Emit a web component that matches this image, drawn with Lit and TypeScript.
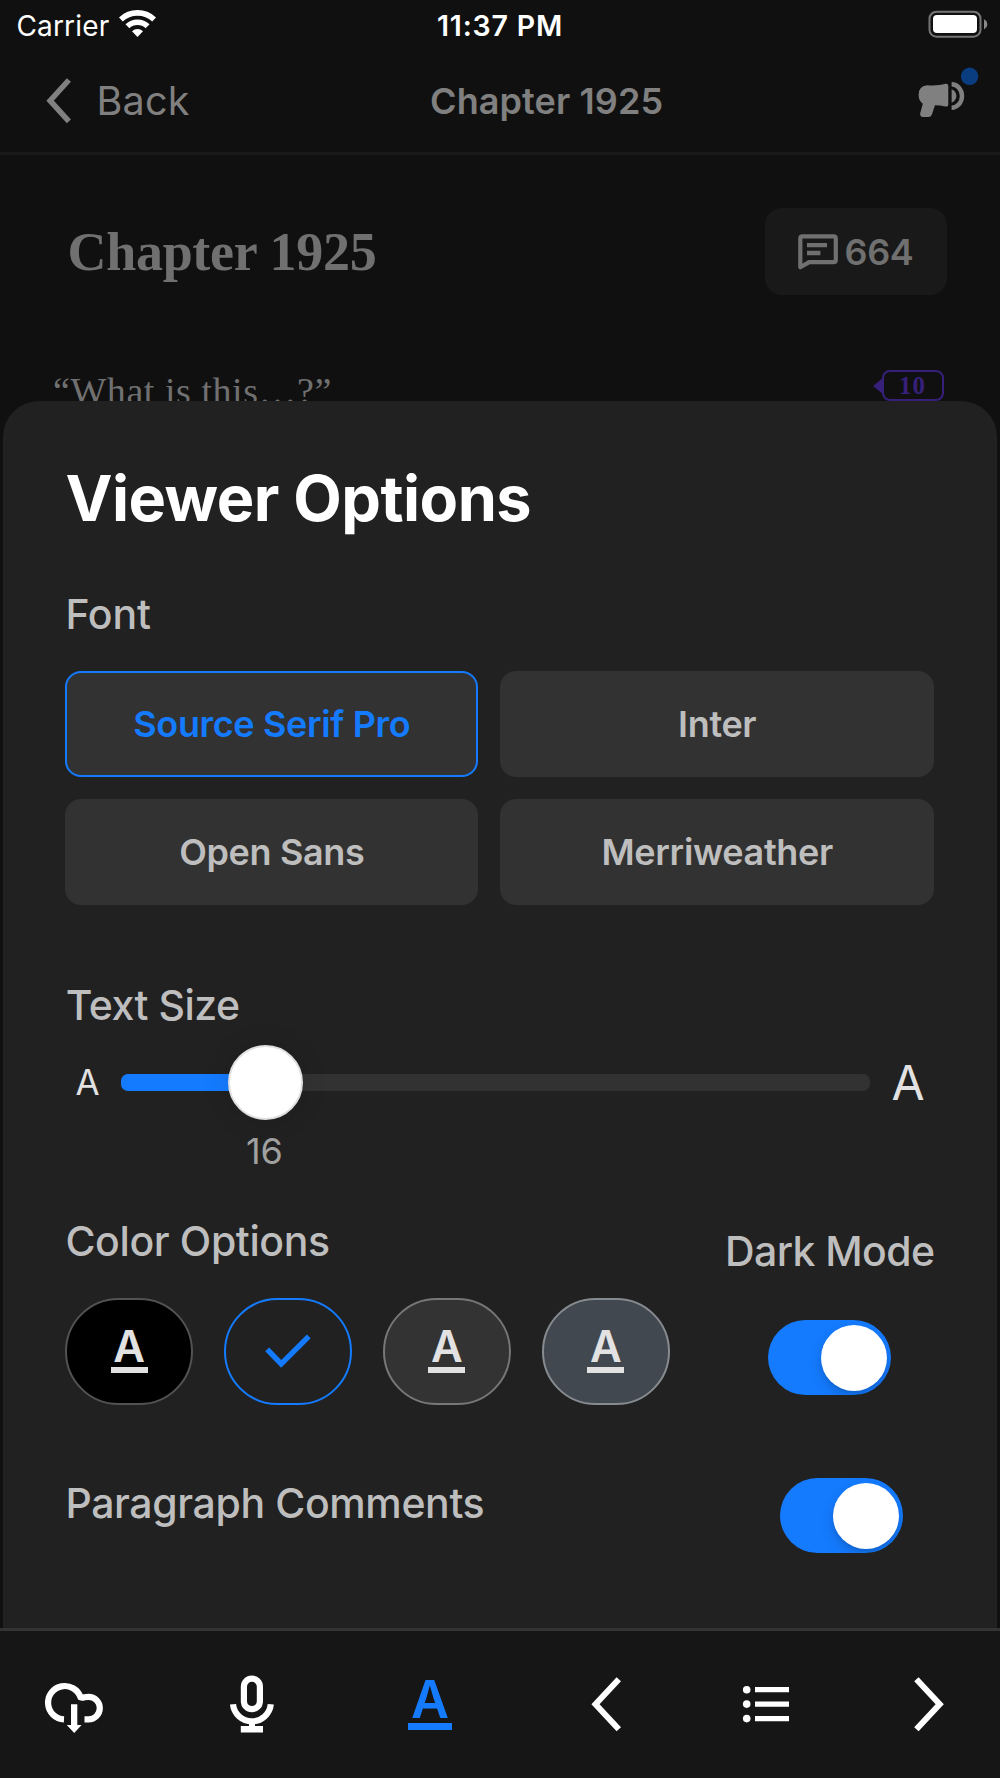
import { LitElement, html, css, svg } from "lit";
import { customElement, property, state } from "lit/decorators.js";
import { classMap } from "lit/directives/class-map.js";
import { styleMap } from "lit/directives/style-map.js";

/** Letter A above a bar, the symbol for text appearance. */
@customElement("letter-mark")
class LetterMark extends LitElement {
  static styles = css`
    :host {
      display: flex;
      flex-direction: column;
      align-items: center;
      font-family: Inter, sans-serif;
      font-weight: 600;
      font-size: 43.6px;
      line-height: 1;
    }
    .bar {
      width: 0.85em;
      height: 0.125em;
      margin-top: -0.035em;
      background: currentColor;
    }
  `;
  render() {
    return html`<span>A</span><span class="bar"></span>`;
  }
}

@customElement("toggle-switch")
class ToggleSwitch extends LitElement {
  @property({ type: Boolean }) on = false;

  static styles = css`
    :host {
      display: block;
    }
    .track {
      box-sizing: border-box;
      display: flex;
      width: 123px;
      height: 75px;
      padding: 4.5px;
      border-radius: 38px;
      background: #39393d;
      overflow: hidden;
    }
    .track.on {
      justify-content: flex-end;
      background: #147bff;
    }
    .knob {
      width: 66px;
      height: 66px;
      border-radius: 50%;
      background: #fff;
      box-shadow: 0 6px 14px rgba(0, 0, 0, 0.16), 0 2px 3px rgba(0, 0, 0, 0.08);
    }
  `;
  render() {
    return html`<div class=${classMap({ track: true, on: this.on })} @click=${() => (this.on = !this.on)}>
      <span class="knob"></span>
    </div>`;
  }
}

@customElement("status-bar")
class StatusBar extends LitElement {
  static styles = css`
    :host {
      display: grid;
      grid-template-columns: 1fr auto 1fr;
      height: 50px;
      line-height: 52px;
      color: #fff;
      font-family: Inter, sans-serif;
      font-size: 28px;
    }
    .carrier {
      display: flex;
      gap: 10px;
      padding-left: 16.5px;
      letter-spacing: 0.15px;
    }
    .wifi {
      margin-top: 10px;
    }
    .time {
      font-size: 28.5px;
      font-weight: 600;
      letter-spacing: 0.8px;
    }
    .battery {
      justify-self: end;
      margin: 10px 11px 0 0;
    }
  `;
  render() {
    return html`
      <div class="carrier">
        <span>Carrier</span>
        <svg class="wifi" width="37" height="28" viewBox="0 0 37 28">
          <g fill="none" stroke="#fff" stroke-width="5.6">
            <path d="M1.85 9.5A24.2 24.2 0 0 1 35.15 9.5" />
            <path d="M8.4 16.3A14.7 14.7 0 0 1 28.6 16.3" />
          </g>
          <path fill="#fff" d="M18.5 27L13 21.3A8 8 0 0 1 24 21.3Z" />
        </svg>
      </div>
      <div class="time">11:37 PM</div>
      <svg class="battery" width="61" height="29" viewBox="0 0 61 29">
        <rect x="1.5" y="1.7" width="51" height="25" rx="7" fill="none" stroke="#757575" stroke-width="2" />
        <rect x="5" y="5" width="44" height="18" rx="4" fill="#fff" />
        <path d="M56 9.3Q59.3 11 59.3 14.2T56 19.2Z" fill="#8a8a8a" />
      </svg>
    `;
  }
}

const toolIcons = {
  download: svg`
    <path fill="none" stroke="#fff" stroke-width="6.2" stroke-linejoin="round"
      d="M20 45.4A16.7 16.7 0 1 1 36.6 23.4Q38.2 23.9 40.4 23.2Q42.2 22.8 44.5 22.8A11.3 11.3 0 0 1 44.5 45.4H40.5" />
    <path fill="#fff" d="M27 30.2H33.3V51H37.6L30.2 59L22.8 51H27Z" />`,
  mic: svg`
    <g fill="none" stroke="#fff" stroke-width="6.2">
      <rect x="21.9" y="4.6" width="16" height="30.6" rx="8" />
      <path d="M11 30.3A19 19 0 0 0 48.8 30.3" />
    </g>
    <path fill="#fff" d="M27 46H33V52H41V58.5H18.8V52H27Z" />`,
  previous: svg`<path fill="none" stroke="#fff" stroke-width="6" d="M42.8 5.2L19.5 30.2L42.8 55.3" />`,
  list: svg`
    <g fill="#fff">
      <circle cx="10.7" cy="15.7" r="3.8" /><circle cx="10.7" cy="30.1" r="3.8" /><circle cx="10.7" cy="44.6" r="3.8" />
    </g>
    <path stroke="#fff" stroke-width="5.3" d="M19 15.7H53M19 30.1H53M19 44.6H53" />`,
  next: svg`<path fill="none" stroke="#fff" stroke-width="6" d="M17.4 5.2L40.7 30.2L17.4 55.3" />`,
};

@customElement("app-root")
class AppRoot extends LitElement {
  @state() private font = "Source Serif Pro";
  @state() private theme = "charcoal";

  private textSize = { value: 16, position: 19.25 };
  private fonts = ["Source Serif Pro", "Inter", "Open Sans", "Merriweather"];
  private themes = ["black", "charcoal", "gray", "slate"];

  static styles = css`
    :host {
      display: flex;
      flex-direction: column;
      width: 1000px;
      height: 1778px;
      overflow: hidden;
      background: #101010;
      font-family: Inter, sans-serif;
      color: #bebebe;
    }
    .header {
      box-sizing: border-box;
      display: grid;
      grid-template-columns: 430px 1fr auto;
      height: 105px;
      border-bottom: 3px solid #191919;
      line-height: 102px;
      color: #808080;
    }
    .back {
      display: flex;
      padding-left: 43.5px;
      font-size: 39.5px;
      letter-spacing: 0.2px;
    }
    .back svg {
      width: 53px;
      height: 102px;
    }
    .nav-title {
      font-size: 36px;
      font-weight: 600;
      letter-spacing: 0.1px;
    }
    .announce {
      margin: 15px 20px 0 0;
    }
    .reader {
      height: 246px;
      overflow: hidden;
      font-family: "Liberation Serif", serif;
      color: #707070;
    }
    .chapter {
      display: flex;
      align-items: center;
      justify-content: space-between;
      margin: 53px 53.5px 0 67.5px;
    }
    .chapter-title {
      font-size: 54px;
      line-height: 60px;
      font-weight: 700;
      letter-spacing: -0.3px;
    }
    .comments {
      box-sizing: border-box;
      display: flex;
      align-items: center;
      gap: 6px;
      width: 182px;
      height: 87px;
      padding-left: 32px;
      border-radius: 17px;
      background: #191919;
      font: 600 36px/44px Inter, sans-serif;
      letter-spacing: -0.4px;
    }
    .paragraph {
      display: flex;
      justify-content: space-between;
      align-items: flex-start;
      margin: 74px 56.5px 0 53px;
    }
    .quote {
      font-size: 38px;
      line-height: 44px;
      letter-spacing: 0.55px;
    }
    .bubble {
      display: flex;
      align-items: center;
      margin-top: 1px;
      color: #36207a;
    }
    .bubble svg {
      margin-right: -2px;
    }
    .count {
      box-sizing: border-box;
      width: 62px;
      height: 31px;
      border: 2px solid;
      border-radius: 8px;
      text-align: center;
      font-size: 25px;
      line-height: 27px;
      font-weight: 700;
      letter-spacing: 1px;
    }
    .sheet {
      box-sizing: border-box;
      height: 1227px;
      margin: 0 2.6px;
      padding: 59px 63px 0 62.8px;
      border-radius: 36px 36px 0 0;
      background: #212121;
    }
    .title {
      margin: 0;
      font-size: 63px;
      line-height: 76px;
      font-weight: 700;
      letter-spacing: -0.53px;
      color: #fff;
    }
    .label {
      font-size: 41px;
      line-height: 50px;
      font-weight: 500;
      letter-spacing: -0.38px;
      white-space: nowrap;
    }
    .font-label {
      margin-top: 53px;
      letter-spacing: -0.2px;
    }
    .fonts {
      display: grid;
      grid-template-columns: 412.8px 1fr;
      grid-auto-rows: 106px;
      gap: 22px 21.8px;
      margin-top: 32px;
    }
    .font {
      box-sizing: border-box;
      display: flex;
      align-items: center;
      justify-content: center;
      border: 2px solid #323232;
      border-radius: 16px;
      background: #323232;
      font-size: 36px;
      font-weight: 600;
      letter-spacing: -0.35px;
    }
    .font.selected {
      border-color: #147bff;
      color: #147bff;
    }
    .size-label {
      margin: 75px 0 0 0.3px;
      letter-spacing: -0.5px;
    }
    .size {
      display: grid;
      grid-template-columns: 56px 749px 1fr;
      align-items: center;
      height: 76px;
      margin-top: 14px;
      color: #e2e2e2;
    }
    .small-a {
      padding-left: 10px;
      font-size: 35px;
    }
    .large-a {
      padding-left: 21px;
      font-size: 48px;
    }
    .rail {
      position: relative;
      height: 17px;
      border-radius: 7px;
      background: #323232;
    }
    .fill {
      height: 17px;
      border-radius: 7px 0 0 7px;
      background: #147bff;
    }
    .thumb {
      box-sizing: border-box;
      position: absolute;
      top: -29px;
      width: 75px;
      height: 75px;
      margin-left: -37.5px;
      border: 2px solid #e0e0e0;
      border-radius: 50%;
      background: #fff;
      box-shadow: 0 1px 28px rgba(0, 0, 0, 0.12);
    }
    .size-value {
      width: 398px;
      margin-top: 9px;
      text-align: center;
      font-size: 36px;
      line-height: 44px;
      color: #a0a0a0;
    }
    .appearance {
      display: flex;
      justify-content: space-between;
      margin-top: 43px;
    }
    .swatches {
      display: flex;
      gap: 31.3px;
      margin-top: 31.5px;
    }
    .swatch {
      box-sizing: border-box;
      display: flex;
      align-items: center;
      justify-content: center;
      width: 127.6px;
      height: 107px;
      border: 2px solid;
      border-radius: 54px;
    }
    .swatch letter-mark {
      padding-bottom: 4.5px;
      color: #e2e2e2;
    }
    .black {
      background: #000;
      border-color: #525252;
    }
    .charcoal {
      background: #212121;
      border-color: #666;
    }
    .gray {
      background: #333;
      border-color: #777;
    }
    .slate {
      background: #424850;
      border-color: #868b90;
    }
    .swatch.selected {
      border-color: #147bff;
    }
    .dark {
      display: flex;
      flex-direction: column;
      align-items: center;
      gap: 44px;
      margin: 10px 0 0;
    }
    .dark .label {
      letter-spacing: -0.6px;
    }
    .paragraph-comments {
      display: flex;
      justify-content: space-between;
      align-items: flex-start;
      margin-top: 73.5px;
      padding-right: 31.3px;
    }
    .toolbar {
      box-sizing: border-box;
      display: grid;
      grid-template-columns: 178px 178px 176px 160px 162.5px 60px;
      height: 150px;
      padding: 43px 0 0 44px;
      border-top: 3px solid #333;
      background: #161616;
    }
    .toolbar letter-mark {
      justify-self: start;
      width: 60px;
      margin-top: -1px;
      font-size: 52.3px;
      color: #147bff;
    }
  `;

  private tool(name: keyof typeof toolIcons) {
    return html`<svg width="60" height="60" viewBox="0 0 60 60">${toolIcons[name]}</svg>`;
  }

  private swatch(name: string) {
    const selected = name === this.theme;
    return html`<div
      class=${classMap({ swatch: true, [name]: true, selected })}
      @click=${() => (this.theme = name)}
    >
      ${selected
        ? html`<svg width="50" height="38" viewBox="0 0 50 38">
            <path fill="none" stroke="#147bff" stroke-width="5.4" d="M4.2 17.3L18.2 31.8L45.8 4.4" />
          </svg>`
        : html`<letter-mark></letter-mark>`}
    </div>`;
  }

  render() {
    const position = `${this.textSize.position}%`;
    return html`
      <status-bar></status-bar>
      <div class="header">
        <div class="back">
          <svg viewBox="0 0 53 102">
            <path fill="none" stroke="#808080" stroke-width="5.5" d="M24.9 30L6.1 50.7L24.9 71.4" />
          </svg>
          <span>Back</span>
        </div>
        <div class="nav-title">Chapter 1925</div>
        <svg class="announce" width="64" height="54" viewBox="916 65 64 54">
          <g fill="#808080">
            <path d="M927.5 85.2C935 85.8 940 85 945.5 83.8Q948.3 83.4 948.3 86V104.4Q948.3 107 945.5 106.5Q940 105.3 935 105.2L931.9 114.4Q931 116.9 928.3 116.9H923.2Q919.6 116.9 920.2 113.2L922.8 103.7Q918.6 100.8 918.6 95Q918.6 85.6 927.5 85.2Z" />
            <path d="M951.6 89.3Q956.4 91.6 956.4 96T951.6 102.7Z" />
          </g>
          <path fill="none" stroke="#808080" stroke-width="4.4" d="M951.6 84.3A10.4 11.7 0 0 1 951.6 107.7" />
          <circle cx="969.6" cy="76.3" r="8.7" fill="#0a3d80" />
        </svg>
      </div>

      <div class="reader">
        <div class="chapter">
          <div class="chapter-title">Chapter 1925</div>
          <div class="comments">
            <svg width="42" height="38" viewBox="797 232.5 42 38">
              <path fill="none" stroke="#707070" stroke-width="4.2" stroke-linejoin="round"
                d="M800.3 266.8V238Q800.3 235.8 802.5 235.8H833.6Q835.8 235.8 835.8 238V259.4Q835.8 261.6 833.6 261.6H809.2Z" />
              <path stroke="#707070" stroke-width="4.4" d="M807 244.6H827M807 252.5H820.4" />
            </svg>
            <span>664</span>
          </div>
        </div>
        <div class="paragraph">
          <div class="quote">“What is this…?”</div>
          <div class="bubble">
            <svg width="11" height="18" viewBox="0 0 11 18"><path fill="#36207a" d="M0 9L11 0V18Z" /></svg>
            <span class="count">10</span>
          </div>
        </div>
      </div>

      <div class="sheet">
        <h1 class="title">Viewer Options</h1>
        <div class="label font-label">Font</div>
        <div class="fonts">
          ${this.fonts.map(
            (name) => html`<div
              class=${classMap({ font: true, selected: name === this.font })}
              @click=${() => (this.font = name)}
            >
              ${name}
            </div>`
          )}
        </div>

        <div class="label size-label">Text Size</div>
        <div class="size">
          <span class="small-a">A</span>
          <div class="rail">
            <div class="fill" style=${styleMap({ width: position })}></div>
            <div class="thumb" style=${styleMap({ left: position })}></div>
          </div>
          <span class="large-a">A</span>
        </div>
        <div class="size-value">${this.textSize.value}</div>

        <div class="appearance">
          <div>
            <div class="label">Color Options</div>
            <div class="swatches">${this.themes.map((name) => this.swatch(name))}</div>
          </div>
          <div class="dark">
            <div class="label">Dark Mode</div>
            <toggle-switch on></toggle-switch>
          </div>
        </div>

        <div class="paragraph-comments">
          <div class="label">Paragraph Comments</div>
          <toggle-switch on></toggle-switch>
        </div>
      </div>

      <div class="toolbar">
        ${this.tool("download")} ${this.tool("mic")}
        <letter-mark></letter-mark>
        ${this.tool("previous")} ${this.tool("list")} ${this.tool("next")}
      </div>
    `;
  }
}
